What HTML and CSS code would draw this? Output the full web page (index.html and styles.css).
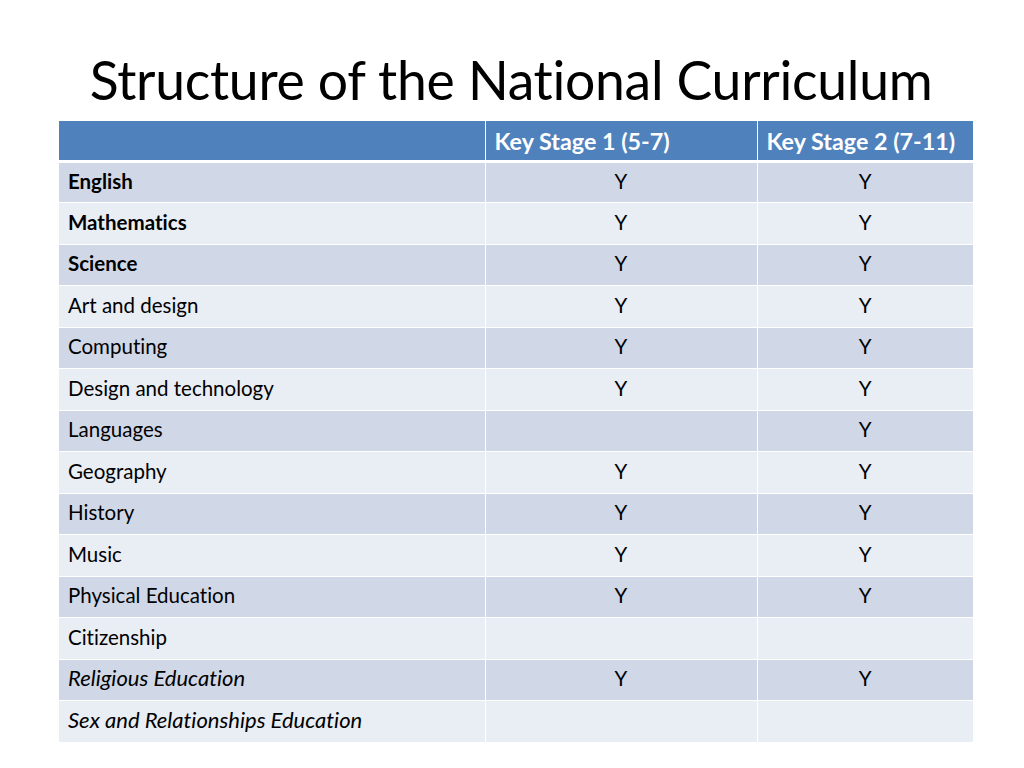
FILE: index.html
```html
<!DOCTYPE html>
<html>
<head>
<meta charset="utf-8">
<link rel="stylesheet" href="styles.css">
</head>
<body>
<div class="slide">
  <h1 class="title">Structure of the National Curriculum</h1>
  <table class="nc">
    <colgroup><col class="c1"><col class="c2"><col class="c3"></colgroup>
    <thead>
      <tr><th class="subj"></th><th>Key Stage 1 (5-7)</th><th>Key Stage 2 (7-11)</th></tr>
    </thead>
    <tbody>
      <tr class="odd"><td class="subj b">English</td><td>Y</td><td>Y</td></tr>
      <tr><td class="subj b">Mathematics</td><td>Y</td><td>Y</td></tr>
      <tr class="odd"><td class="subj b">Science</td><td>Y</td><td>Y</td></tr>
      <tr><td class="subj">Art and design</td><td>Y</td><td>Y</td></tr>
      <tr class="odd"><td class="subj">Computing</td><td>Y</td><td>Y</td></tr>
      <tr><td class="subj">Design and technology</td><td>Y</td><td>Y</td></tr>
      <tr class="odd"><td class="subj">Languages</td><td></td><td>Y</td></tr>
      <tr><td class="subj">Geography</td><td>Y</td><td>Y</td></tr>
      <tr class="odd"><td class="subj">History</td><td>Y</td><td>Y</td></tr>
      <tr><td class="subj">Music</td><td>Y</td><td>Y</td></tr>
      <tr class="odd"><td class="subj">Physical Education</td><td>Y</td><td>Y</td></tr>
      <tr><td class="subj">Citizenship</td><td></td><td></td></tr>
      <tr class="odd"><td class="subj i">Religious Education</td><td>Y</td><td>Y</td></tr>
      <tr><td class="subj i">Sex and Relationships Education</td><td></td><td></td></tr>
    </tbody>
  </table>
</div>
</body>
</html>
```
FILE: styles.css
```css
html, body {
  margin: 0;
  padding: 0;
  background: #ffffff;
}
.slide {
  width: 1024px;
  height: 768px;
  position: relative;
  overflow: hidden;
  font-family: "Lato", "Open Sans", sans-serif;
  font-variant-ligatures: none;
  color: #000;
}
.title {
  margin: 0;
  padding-top: 47px;
  height: 74px;
  font-weight: 400;
  font-size: 53.5px;
  line-height: 64px;
  text-align: center;
  letter-spacing: -0.3px;
  padding-right: 2px;
}
.nc {
  margin-left: 59px;
  width: 914px;
  border-collapse: collapse;
  table-layout: fixed;
  font-size: 20.5px;
}
.nc col.c1 { width: 426px; }
.nc col.c2 { width: 272px; }
.nc col.c3 { width: 216px; }
.nc th, .nc td {
  box-sizing: border-box;
  border: 1px solid #ffffff;
  padding: 0;
  text-align: center;
  line-height: 24px;
  overflow: hidden;
  white-space: nowrap;
}
.nc thead th {
  background: #4f81bd;
  color: #ffffff;
  font-weight: 700;
  font-size: 23.3px;
  height: 40px;
  text-align: left;
  border-bottom: 3px solid #ffffff;
  border-top: none;
  padding: 1px 0 0 9px;
}
.nc tbody td {
  height: 41.5px;
  background: #e9edf4;
  padding-bottom: 3px;
}
.nc tbody tr.odd td {
  background: #d0d8e8;
}
.nc td.subj {
  text-align: left;
  padding-left: 9px;
}
.nc .b { font-weight: 700; }
.nc .i { font-style: italic; font-size: 22px; }
.nc tr > *:first-child { border-left: none; }
.nc tr > *:last-child { border-right: none; }
.nc tbody tr:last-child td { border-bottom: none; }
```
